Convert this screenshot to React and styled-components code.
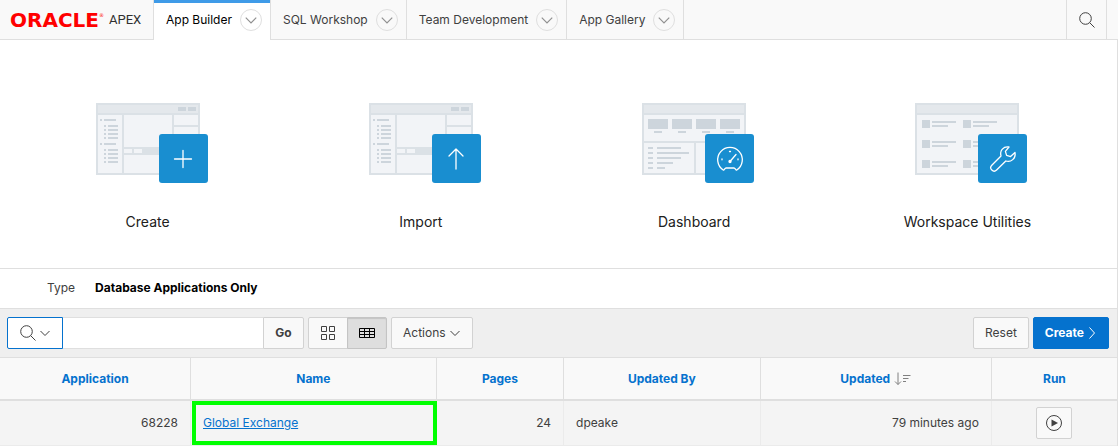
import React from "react";
import styled, { createGlobalStyle, css } from "styled-components";

const GlobalStyle = createGlobalStyle`
  *, *::before, *::after { box-sizing: border-box; }
  body {
    margin: 0;
    background: #fff;
    color: #404040;
    font-family: Inter, "Liberation Sans", sans-serif;
    font-size: 12px;
    line-height: 16px;
  }
  button, input { font: inherit; color: inherit; }
  a { color: inherit; }
`;

const Header = styled.header`
  display: flex;
  height: 40px;
  background: #f9f9f9;
  border-bottom: 1px solid #dfdfdf;
`;

const Brand = styled.a`
  display: flex;
  align-items: center;
  gap: 5px;
  width: 153px;
  padding-left: 10px;
  text-decoration: none;
`;

const BrandName = styled.span`
  display: flex;
  color: #f00;
  font-family: "DejaVu Sans", sans-serif;
  font-size: 20px;
  font-weight: 700;
  line-height: 20px;
`;

const BrandMark = styled.span`
  font-size: 5px;
  font-weight: 400;
  line-height: 10px;
`;

const BrandProduct = styled.span`
  color: #303030;
  font-family: Roboto, sans-serif;
  font-size: 13px;
`;

const Tabs = styled.nav`
  display: flex;
  border-left: 1px solid #dfdfdf;
`;

const Tab = styled.div`
  display: flex;
  align-items: center;
  gap: 8px;
  height: ${(p) => (p.$active ? "40px" : "39px")};
  padding: 0 8px 0 12px;
  border-right: 1px solid #dfdfdf;
  color: ${(p) => (p.$active ? "#000" : "#404040")};
  ${(p) =>
    p.$active &&
    css`
      background: #fff;
      box-shadow: inset 0 3px 0 #3f9be8;
    `}
`;

const TabLink = styled.a`
  text-decoration: none;
  white-space: nowrap;
`;

const TabMenu = styled.button`
  display: grid;
  place-items: center;
  width: 22px;
  height: 22px;
  padding: 0;
  border: 1px solid #dfdfdf;
  border-radius: 50%;
  background: transparent;
  color: #909090;
`;

const HeaderSearch = styled.button`
  display: grid;
  place-items: center;
  width: 41px;
  margin: 0 11px 0 auto;
  padding: 0;
  border: solid #dfdfdf;
  border-width: 0 1px;
  background: transparent;
`;

const Page = styled.main`
  border-right: 1px solid #dfdfdf;
`;

const Launcher = styled.section`
  display: grid;
  grid-template-columns: repeat(4, 1fr);
  padding: 63px 13px 36px 11px;
`;

const Card = styled.a`
  display: flex;
  flex-direction: column;
  align-items: center;
  gap: 37px;
  color: #202020;
  font-size: 14px;
  line-height: 20px;
  text-decoration: none;
`;

const Art = styled.span`
  position: relative;
  width: 104px;
  height: 72px;
`;

const Badge = styled.span`
  position: absolute;
  top: 31px;
  left: 63px;
  display: grid;
  place-items: center;
  width: 49px;
  height: 49px;
  border-radius: 3px;
  background: #198ed0;
`;

const FilterBar = styled.dl`
  display: flex;
  gap: 20px;
  height: 40px;
  margin: 0;
  padding: 11px 47px;
  border-top: 1px solid #dfdfdf;
`;

const FilterLabel = styled.dt``;

const FilterValue = styled.dd`
  margin: 0;
  color: #000;
  font-weight: 700;
`;

const Toolbar = styled.form`
  display: flex;
  gap: 4px;
  padding: 8px 8px 8px 7px;
  border-top: 1px solid #dfdfdf;
  background: #efefef;
`;

const SearchGroup = styled.div`
  display: flex;
`;

const Button = styled.button`
  display: flex;
  align-items: center;
  justify-content: center;
  gap: 3px;
  height: 32px;
  padding: 0 11px;
  border: 1px solid #d2d2d2;
  border-radius: 2px;
  background: #f9f9f9;
  color: #404040;
  white-space: nowrap;
`;

const ColumnButton = styled(Button)`
  width: 56px;
  padding: 0;
  border-color: #0572ce;
  border-radius: 2px 0 0 2px;
  background: #fff;
`;

const SearchInput = styled.input`
  width: 200px;
  height: 32px;
  padding: 0 8px;
  border: solid #dfdfdf;
  border-width: 1px 0;
  border-radius: 0;
  background: #fff;
  outline: none;
`;

const GoButton = styled(Button)`
  width: 41px;
  border-radius: 0 2px 2px 0;
  font-weight: 700;
`;

const ViewGroup = styled.div`
  display: flex;
`;

const ViewButton = styled(Button)`
  width: 40px;
  padding: 0;
  border-radius: 2px 0 0 2px;
  & + & {
    margin-left: -1px;
    border-radius: 0 2px 2px 0;
  }
  ${(p) =>
    p.$pressed &&
    css`
      border-color: #c4c4c4;
      background: #dedede;
      box-shadow: inset 0 1px 1px #c4c4c4;
      color: #000;
    `}
`;

const ToolbarEnd = styled.div`
  display: flex;
  gap: 4px;
  margin-left: auto;
`;

const PrimaryButton = styled(Button)`
  border-color: #0572ce;
  background: #0572ce;
  color: #fff;
  font-weight: 700;
`;

const Report = styled.table`
  width: 100%;
  border-collapse: separate;
  border-spacing: 0;
  border-top: 1px solid #dfdfdf;
  table-layout: fixed;
`;

const Column = styled.col`
  width: ${(p) => p.$width};
`;

const HeadCell = styled.th`
  height: 43px;
  padding: 0 12px;
  border-right: 1px solid #dfdfdf;
  border-bottom: 2px solid #dfdfdf;
  background: #f9f9f9;
  text-align: center;
  &:last-child { border-right: 0; }
`;

const SortLink = styled.a`
  display: inline-flex;
  align-items: center;
  gap: 4px;
  color: #0572ce;
  font-weight: 700;
  line-height: 14px;
  text-decoration: none;
`;

const Cell = styled.td`
  position: relative;
  height: 45px;
  padding: 0 12px;
  border-right: 1px solid #ebebeb;
  border-bottom: 1px solid #ebebeb;
  background: #f4f4f4;
  text-align: ${(p) => p.$align || "left"};
  &:last-child { border-right: 0; }
`;

const MarkedCell = styled(Cell)`
  &::after {
    content: "";
    position: absolute;
    inset: 0 -1px 0 1px;
    border: 4px solid #0f0;
    pointer-events: none;
  }
`;

const AppLink = styled.a`
  color: #0572ce;
`;

const RunButton = styled(Button)`
  width: 36px;
  margin: 0 auto;
  padding: 0;
`;

const Chevron = ({ size = 12 }) => (
  <svg width={size} height={size} viewBox="0 0 12 12" fill="none" stroke="currentColor" aria-hidden="true">
    <path d="M1.500 4 6 8.500 10.500 4" />
  </svg>
);

const Magnifier = () => (
  <svg width="16" height="16" viewBox="0 0 16 16" fill="none" stroke="currentColor" aria-hidden="true">
    <circle cx="6.500" cy="6.500" r="5.800" />
    <path d="m10.700 10.700 4.800 4.800" />
  </svg>
);

const Blocks = ({ fill = "#cdd5dc", items }) => (
  <g fill={fill}>
    {items.map(([x, y, w, h], i) => (
      <rect key={i} x={x} y={y} width={w} height={h} />
    ))}
  </g>
);

const Wireframe = ({ children }) => (
  <svg width="104" height="72" viewBox="0 0 104 72" aria-hidden="true">
    <rect width="104" height="72" fill="#dbe1e6" />
    <rect x="2" y="2" width="100" height="8" fill="#e4e8ec" />
    <rect x="2" y="12" width="100" height="58" fill="#f2f4f7" />
    {children}
  </svg>
);

const treeRows = [
  [4, 16, 2, 2], [8, 16, 12, 2], [4, 40, 2, 2], [8, 40, 12, 2],
  ...[22, 26, 30, 34, 46, 50, 54, 58].flatMap((y) => [[8, y, 2, 2], [12, y, 10, 2]]),
];

const BuilderArt = () => (
  <Wireframe>
    <Blocks fill="#dbe1e6" items={[[26, 12, 2, 58], [76, 12, 2, 58], [78, 22, 24, 2], [28, 44, 50, 8]]} />
    <Blocks fill="#f2f4f7" items={[[28, 46, 8, 4], [38, 46, 8, 4]]} />
    <Blocks items={[[82, 4, 8, 4], [92, 4, 8, 4], ...treeRows]} />
  </Wireframe>
);

const DashboardArt = () => (
  <Wireframe>
    <Blocks fill="#dbe1e6" items={[[2, 38, 100, 2], [52, 40, 2, 30]]} />
    <Blocks
      items={[
        ...[6, 30, 54, 78].flatMap((x) => [[x, 16, 20, 10], [x + 6, 28, 8, 2]]),
        ...[24, 32, 24, 16, 8].flatMap((w, i) => [[6, 44 + i * 5, 5, 2], [15, 44 + i * 5, w, 2]]),
      ]}
    />
  </Wireframe>
);

const UtilitiesArt = () => (
  <Wireframe>
    <Blocks
      items={[17, 37, 57].flatMap((y) =>
        [7, 48].flatMap((x) => [[x, y, 8, 8], [x + 10, y + 1, 24, 2], [x + 10, y + 5, 16, 2]])
      )}
    />
  </Wireframe>
);

const BadgeIcon = ({ children }) => (
  <svg width="32" height="32" viewBox="0 0 32 32" fill="none" stroke="#fff" strokeWidth="1.3" strokeLinecap="round" strokeLinejoin="round" aria-hidden="true">
    {children}
  </svg>
);

const cards = [
  { label: "Create", art: <BuilderArt />, icon: <path d="M16 7.500v17M7.500 16h17" /> },
  { label: "Import", art: <BuilderArt />, icon: <path d="M16 26V6M9 13l7-7 7 7" /> },
  {
    label: "Dashboard",
    art: <DashboardArt />,
    icon: (
      <>
        <path d="M9.200 27A12.300 12.300 0 1 1 22.800 27C21.800 27.800 21.300 25 20 25H12C10.700 25 10.200 27.800 9.200 27Z" />
        <path d="M16 18.500 22 11.500M15.500 8.500h1M8 15.800v1M24 15.800v1" />
        <circle cx="16" cy="18.500" r="1" fill="#fff" />
      </>
    ),
  },
  {
    label: "Workspace Utilities",
    art: <UtilitiesArt />,
    icon: (
      <path d="M22 4C16.500 3 12.500 7.500 14 13L4.800 22.200A3.200 3.200 0 0 0 9.600 27L18.800 18C24 19.700 29 15.500 28 9.500L23.600 13.600 19.600 12.400 18.400 8.400Z" />
    ),
  },
];

const tabs = ["App Builder", "SQL Workshop", "Team Development", "App Gallery"];

const columns = [
  { name: "Application", width: "17.1%" },
  { name: "Name", width: "22%" },
  { name: "Pages", width: "11.4%" },
  { name: "Updated By", width: "17.6%" },
  { name: "Updated", width: "20.7%", sorted: true },
  { name: "Run", width: "auto" },
];

const SortIcon = () => (
  <svg width="17" height="14" viewBox="0 0 17 14" fill="none" stroke="#808080" aria-hidden="true">
    <path d="M4 .5v12M1 9.500l3 3 3-3M9 3.500h7.500M9 6.500h5.500M9 9.500h3" />
  </svg>
);

export default function App() {
  return (
    <>
      <GlobalStyle />
      <Header>
        <Brand href="#">
          <BrandName>
            ORACLE
            <BrandMark>®</BrandMark>
          </BrandName>
          <BrandProduct>APEX</BrandProduct>
        </Brand>
        <Tabs>
          {tabs.map((name, i) => (
            <Tab key={name} $active={i === 0}>
              <TabLink href="#">{name}</TabLink>
              <TabMenu type="button" aria-label={`${name} menu`}>
                <Chevron size={14} />
              </TabMenu>
            </Tab>
          ))}
        </Tabs>
        <HeaderSearch type="button" aria-label="Search">
          <Magnifier />
        </HeaderSearch>
      </Header>
      <Page>
        <Launcher>
          {cards.map((card) => (
            <Card key={card.label} href="#">
              <Art>
                {card.art}
                <Badge>
                  <BadgeIcon>{card.icon}</BadgeIcon>
                </Badge>
              </Art>
              {card.label}
            </Card>
          ))}
        </Launcher>
        <FilterBar>
          <FilterLabel>Type</FilterLabel>
          <FilterValue>Database Applications Only</FilterValue>
        </FilterBar>
        <Toolbar onSubmit={(e) => e.preventDefault()}>
          <SearchGroup>
            <ColumnButton type="button" aria-label="Select columns to search">
              <Magnifier />
              <Chevron />
            </ColumnButton>
            <SearchInput type="text" aria-label="Search applications" />
            <GoButton type="submit">Go</GoButton>
          </SearchGroup>
          <ViewGroup>
            <ViewButton type="button" aria-label="Icon view">
              <svg width="16" height="16" viewBox="0 0 16 16" fill="none" stroke="currentColor" aria-hidden="true">
                <path d="M1.500 1.500h5v5h-5zM9.500 1.500h5v5h-5zM1.500 9.500h5v5h-5zM9.500 9.500h5v5h-5z" />
              </svg>
            </ViewButton>
            <ViewButton type="button" aria-label="Report view" aria-pressed="true" $pressed>
              <svg width="16" height="10" viewBox="0 0 16 10" fill="none" stroke="currentColor" aria-hidden="true">
                <path d="M.5 .5h15v9H.5zM.5 3.500h15M.5 6.500h15M5.500 .5v9M10.500 .5v9" />
              </svg>
            </ViewButton>
          </ViewGroup>
          <Button type="button">
            Actions
            <Chevron />
          </Button>
          <ToolbarEnd>
            <Button type="reset">Reset</Button>
            <PrimaryButton type="button">
              Create
              <svg width="10" height="12" viewBox="0 0 10 12" fill="none" stroke="currentColor" aria-hidden="true">
                <path d="m2.500 .5 5 5.500-5 5.500" />
              </svg>
            </PrimaryButton>
          </ToolbarEnd>
        </Toolbar>
        <Report>
          <colgroup>
            {columns.map((c) => (
              <Column key={c.name} $width={c.width} />
            ))}
          </colgroup>
          <thead>
            <tr>
              {columns.map((c) => (
                <HeadCell key={c.name} scope="col" aria-sort={c.sorted ? "descending" : undefined}>
                  <SortLink href="#">
                    {c.name}
                    {c.sorted && <SortIcon />}
                  </SortLink>
                </HeadCell>
              ))}
            </tr>
          </thead>
          <tbody>
            <tr>
              <Cell $align="right">68228</Cell>
              <MarkedCell>
                <AppLink href="#">Global Exchange</AppLink>
              </MarkedCell>
              <Cell $align="right">24</Cell>
              <Cell>dpeake</Cell>
              <Cell $align="right">79 minutes ago</Cell>
              <Cell>
                <RunButton type="button" aria-label="Run Global Exchange">
                  <svg width="16" height="16" viewBox="0 0 16 16" fill="none" stroke="currentColor" aria-hidden="true">
                    <circle cx="8" cy="8" r="7.500" />
                    <path d="M5.500 4.500 12 8l-6.500 3.500z" fill="currentColor" stroke="none" />
                  </svg>
                </RunButton>
              </Cell>
            </tr>
          </tbody>
        </Report>
      </Page>
    </>
  );
}
